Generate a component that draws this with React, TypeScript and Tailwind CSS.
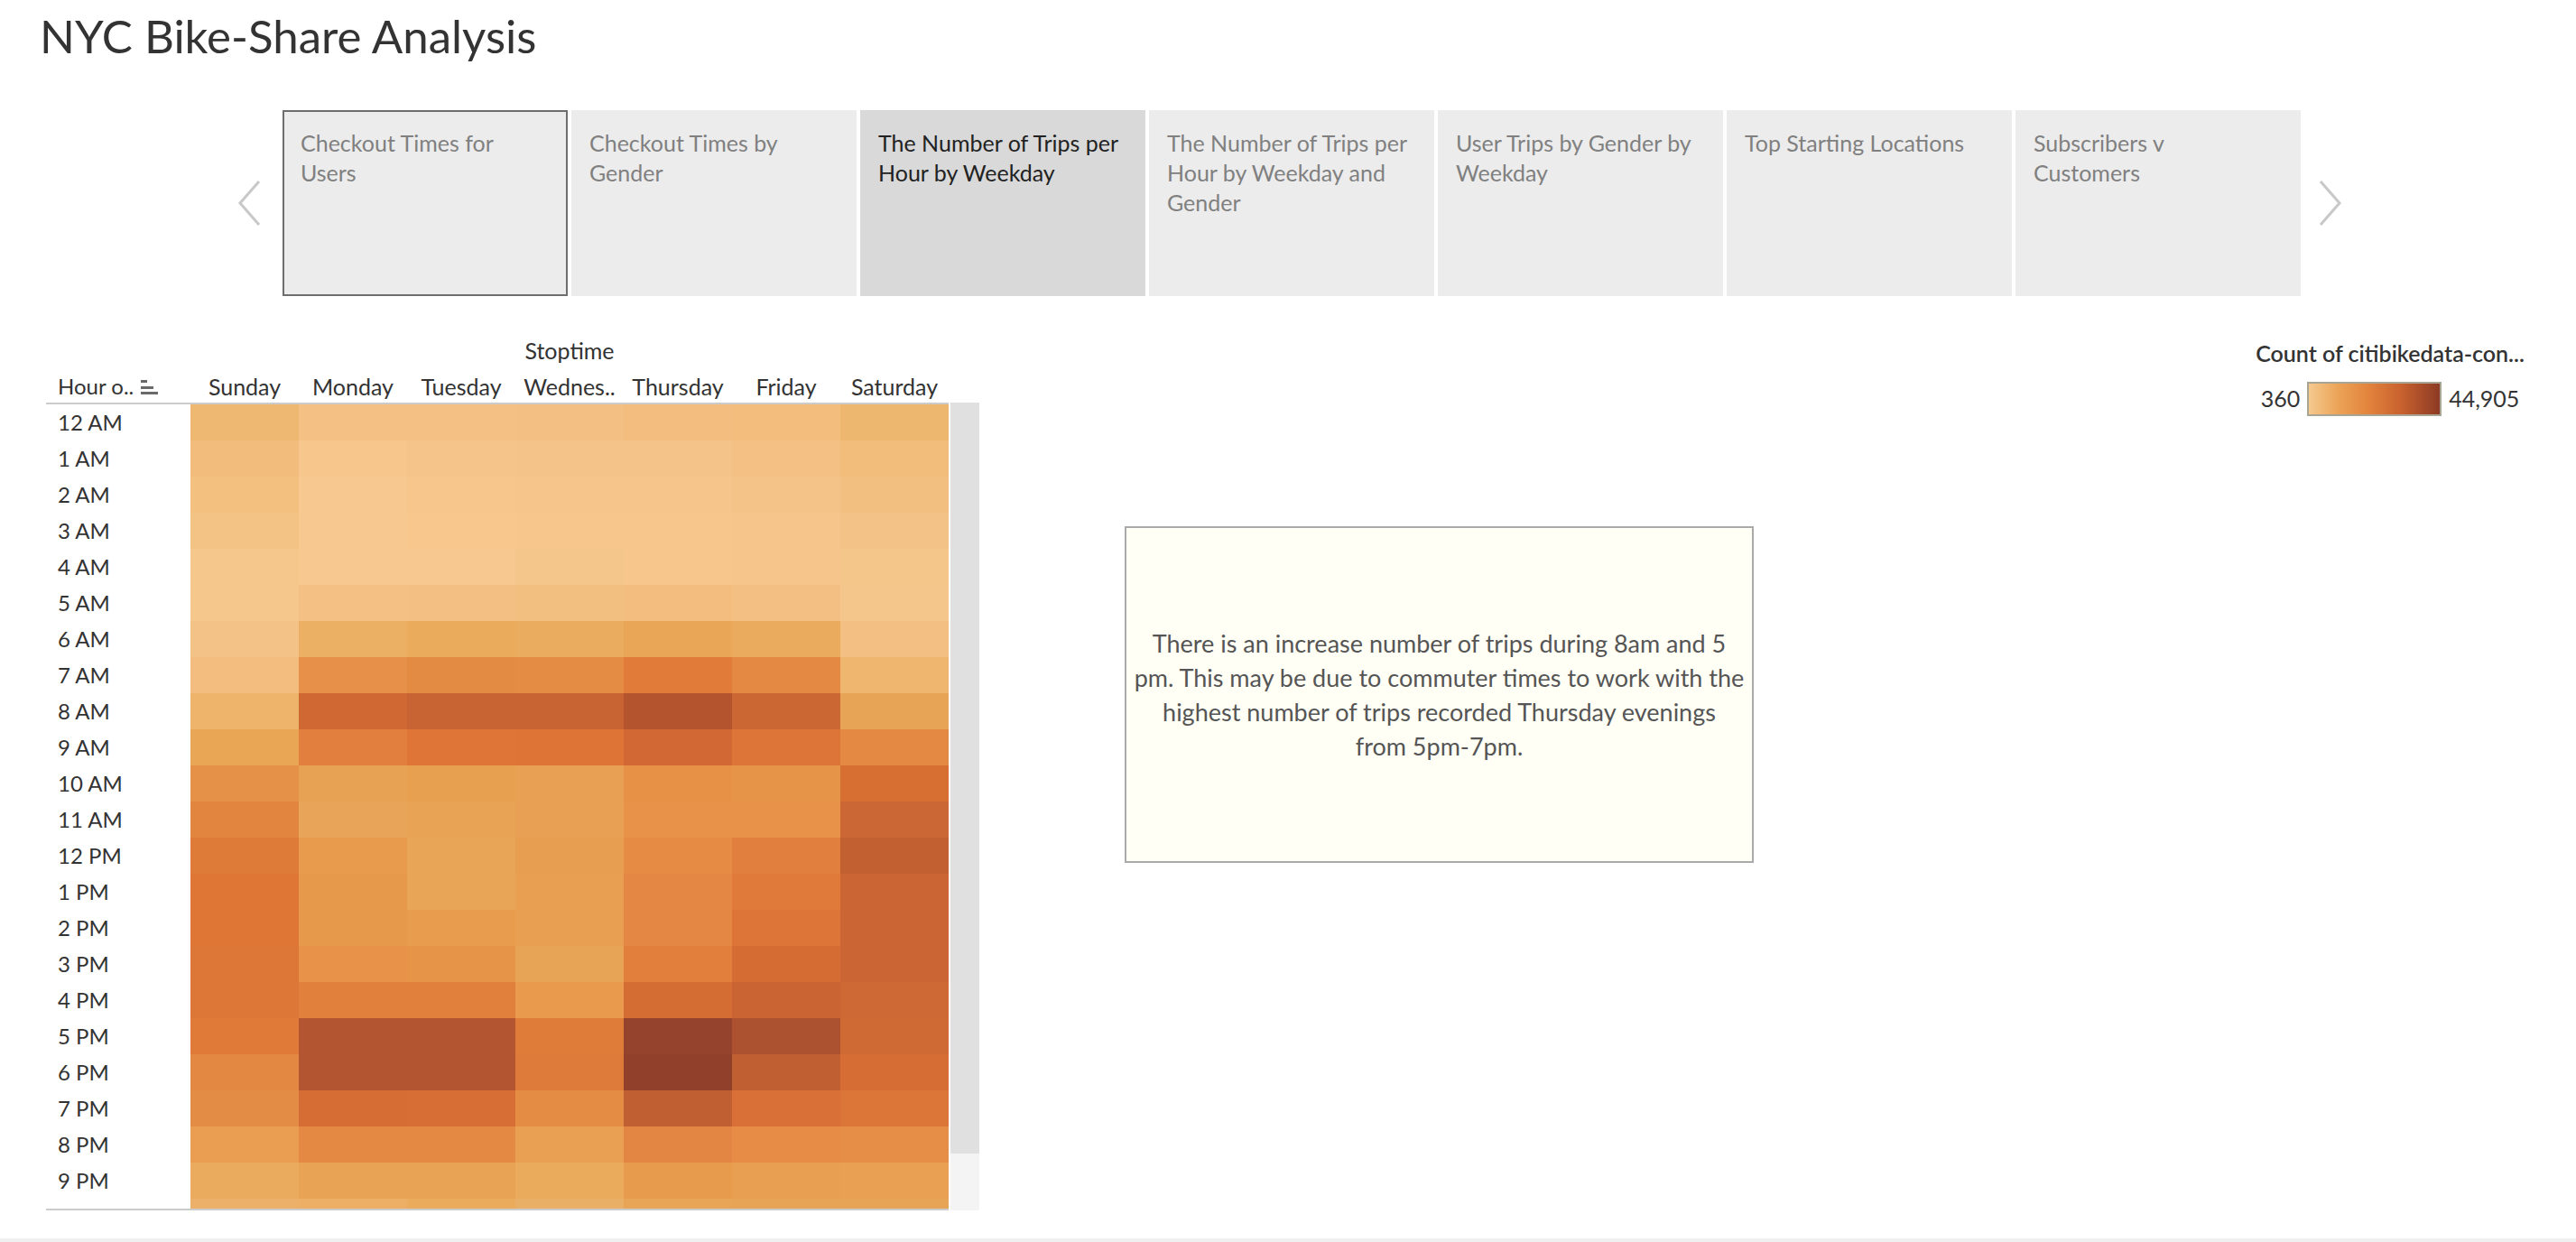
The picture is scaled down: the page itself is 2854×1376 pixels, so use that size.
import React from "react";

const hours = [
  "12 AM", "1 AM", "2 AM", "3 AM", "4 AM", "5 AM", "6 AM", "7 AM", "8 AM", "9 AM", "10 AM", "11 AM",
  "12 PM", "1 PM", "2 PM", "3 PM", "4 PM", "5 PM", "6 PM", "7 PM", "8 PM", "9 PM", "10 PM", "11 PM",
];

// rows past this one sit below the scroll viewport
const visibleRows = 22;

const days = ["Sunday", "Monday", "Tuesday", "Wednes..", "Thursday", "Friday", "Saturday"];

// cell colours, Sunday..Saturday
const cells: string[][] = [
  ["#efb872", "#f4c083", "#f4c083", "#f3bf82", "#f3bd7f", "#f3bd7e", "#eeb76f"],
  ["#f2bd7c", "#f6c68c", "#f5c48a", "#f4c389", "#f4c389", "#f5c083", "#f2bc7b"],
  ["#f4c07f", "#f7c88f", "#f6c68c", "#f5c58b", "#f5c58b", "#f4c388", "#f3bf80"],
  ["#f3c386", "#f7c88f", "#f7c78e", "#f6c68d", "#f6c68d", "#f5c58b", "#f3c286"],
  ["#f6c78d", "#f7c88f", "#f7c88f", "#f5c68c", "#f6c68d", "#f5c58c", "#f4c68a"],
  ["#f6c78d", "#f4c083", "#f3bf82", "#f3bf81", "#f2bd7f", "#f3bf82", "#f5c68c"],
  ["#f3c287", "#ecb065", "#eaab5c", "#eaac5e", "#e8a656", "#eaab5e", "#f3bf83"],
  ["#f2bd7f", "#e69049", "#e38b43", "#e48c44", "#e07b39", "#e38944", "#eeb66f"],
  ["#eeb46c", "#cf6833", "#c86434", "#c86434", "#b3542e", "#cb6733", "#e7a457"],
  ["#e9a755", "#e27f3f", "#df7637", "#de7536", "#d26834", "#dc7537", "#e38944"],
  ["#e59147", "#e7a353", "#e6a050", "#e8a154", "#e69146", "#e69448", "#d76f33"],
  ["#e2863f", "#e8a459", "#e9a354", "#e8a154", "#e89148", "#e89148", "#cb6734"],
  ["#de7b39", "#e89b4d", "#e8a457", "#e89e50", "#e68b44", "#e17f3e", "#c26032"],
  ["#e07635", "#e7994b", "#e8a457", "#e89f52", "#e58744", "#e07a3a", "#cb6634"],
  ["#e07635", "#e7994b", "#e79c4e", "#e89f52", "#e58744", "#dc7537", "#cb6634"],
  ["#dc7737", "#e89148", "#e69448", "#e7a356", "#e27f3d", "#d56c34", "#cb6634"],
  ["#dc7737", "#e17f3c", "#e17f3c", "#e99a4d", "#d46d34", "#ca6533", "#ce6834"],
  ["#df7a38", "#b35530", "#b35530", "#e07c3a", "#95432c", "#ad5230", "#d06a34"],
  ["#e38842", "#b35530", "#b35530", "#df7b3a", "#91412b", "#c05f32", "#d56d35"],
  ["#e38c46", "#d66d34", "#d76e35", "#e48b44", "#c05f32", "#d87037", "#dc7638"],
  ["#e99e51", "#e38944", "#e38944", "#e9a053", "#e38644", "#e68c46", "#e68e48"],
  ["#eaab5e", "#e8a354", "#e8a354", "#eaab5d", "#e79b4c", "#e99f52", "#e9a052"],
  ["#ecb06a", "#ecaf65", "#eaab5d", "#eaaf66", "#e9a557", "#e8a456", "#e8a456"],
  ["#efb872", "#eeb46c", "#edb066", "#eeb46c", "#ecad60", "#ebab5e", "#eaa85a"],
];

type Tab = { lines: string[]; active?: boolean; focused?: boolean };

const tabs: Tab[] = [
  { lines: ["Checkout Times for", "Users"], focused: true },
  { lines: ["Checkout Times by", "Gender"] },
  { lines: ["The Number of Trips per", "Hour by Weekday"], active: true },
  { lines: ["The Number of Trips per", "Hour by Weekday and", "Gender"] },
  { lines: ["User Trips by Gender by", "Weekday"] },
  { lines: ["Top Starting Locations"] },
  { lines: ["Subscribers v", "Customers"] },
];

const note = [
  "There is an increase number of trips during 8am and 5",
  "pm. This may be due to commuter times to work with the",
  "highest number of trips recorded Thursday evenings",
  "from 5pm-7pm.",
];

function Chevron({ right }: { right?: boolean }) {
  return (
    <svg width="27" height="52" viewBox="0 0 27 52" fill="none" className="shrink-0">
      <polyline
        points={right ? "3,2 24,26 3,50" : "24,2 3,26 24,50"}
        stroke="#c8c8c8"
        strokeWidth="3"
      />
    </svg>
  );
}

function SortIcon() {
  return (
    <svg width="20" height="18" viewBox="0 0 20 18" className="ml-[8px]">
      <rect x="0" y="2" width="7" height="3" fill="#6a6a6a" />
      <rect x="0" y="9" width="14" height="3" fill="#6a6a6a" />
      <rect x="0" y="15" width="19" height="3" fill="#6a6a6a" />
    </svg>
  );
}

function Heatmap() {
  return (
    <div className="ml-[51px] w-[1034px] pt-[45px] text-[25px] text-[#333333]">
      <div className="pl-[160px] w-[1000px]">
        <div className="h-[30px] leading-[30px] text-center">Stoptime</div>
      </div>
      <div className="flex items-end h-[43px] pb-[3px] w-[1000px]">
        <div className="w-[160px] pl-[13px] flex items-center h-[30px] leading-[30px] text-[24px]">
          <span>Hour o..</span>
          <SortIcon />
        </div>
        {days.map((d) => (
          <div key={d} className="w-[120px] text-center h-[30px] leading-[30px] whitespace-nowrap">
            {d}
          </div>
        ))}
      </div>
      <div className="flex">
        <div className="w-[1000px] border-t-2 border-b-2 border-[#cbcbcb]">
          <div className="h-[891px] overflow-hidden text-[24px]">
            {hours.map((h, r) => (
              <div key={h} className="flex h-[40px]">
                <div className="w-[160px] pl-[13px] leading-[40px] whitespace-nowrap">
                  {r < visibleRows ? h : null}
                </div>
                {cells[r].map((c, i) => (
                  <div key={i} className="w-[120px] h-[40px]" style={{ backgroundColor: c }} />
                ))}
              </div>
            ))}
          </div>
        </div>
        <div className="ml-[2px] w-[32px] flex flex-col bg-[#f4f4f4]">
          <div className="h-[832px] bg-[#e0e0e0]" />
        </div>
      </div>
    </div>
  );
}

function Note() {
  return (
    <div className="ml-[161px] mt-[255px] w-[697px] h-[373px] border-2 border-[#aaaaaa] bg-[#fffff6] flex flex-col items-center justify-center text-[27px] leading-[38px] text-[#555555]">
      {note.map((l) => (
        <div key={l} className="whitespace-nowrap">{l}</div>
      ))}
    </div>
  );
}

function Legend() {
  return (
    <div className="ml-[545px] mt-[48px] w-[320px] flex flex-col items-center text-[#333333]">
      <div className="text-[25px] leading-[30px] font-semibold whitespace-nowrap">Count of citibikedata-con...</div>
      <div className="mt-[17px] flex items-center text-[25px]">
        <span>360</span>
        <div className="mx-[8px] w-[149px] h-[38px] border-2 border-[#a9a594] bg-[linear-gradient(to_right,#f5c98e,#eba458_22%,#e3843d_45%,#c9622f_70%,#8c3a24)]" />
        <span>44,905</span>
      </div>
    </div>
  );
}

export default function App() {
  return (
    <div className="w-[2854px] h-[1376px] bg-white flex flex-col font-['Lato','Noto_Sans',sans-serif] overflow-hidden">
      <div className="pl-[44px] pt-[10px] text-[51px] leading-[60px] text-[#333333]">NYC Bike-Share Analysis</div>

      <div className="mt-[52px] pl-[263px] flex items-center">
        <Chevron />
        <div className="ml-[23px] flex gap-[4px]">
          {tabs.map((t, i) => (
            <div
              key={i}
              className={`w-[316px] h-[206px] pl-[20px] pt-[20px] text-[25px] leading-[33px] ${
                t.active ? "bg-[#d9d9d9] text-[#222222]" : "bg-[#ececec] text-[#808080]"
              } ${t.focused ? "ring-2 ring-inset ring-[#6e6e6e]" : ""}`}
            >
              {t.lines.map((l) => (
                <div key={l} className="whitespace-nowrap">{l}</div>
              ))}
            </div>
          ))}
        </div>
        <div className="ml-[19px]">
          <Chevron right />
        </div>
      </div>

      <div className="flex items-start">
        <Heatmap />
        <Note />
        <Legend />
      </div>

      <div className="mt-auto h-[4px] bg-[#f0f0f0]" />
    </div>
  );
}
